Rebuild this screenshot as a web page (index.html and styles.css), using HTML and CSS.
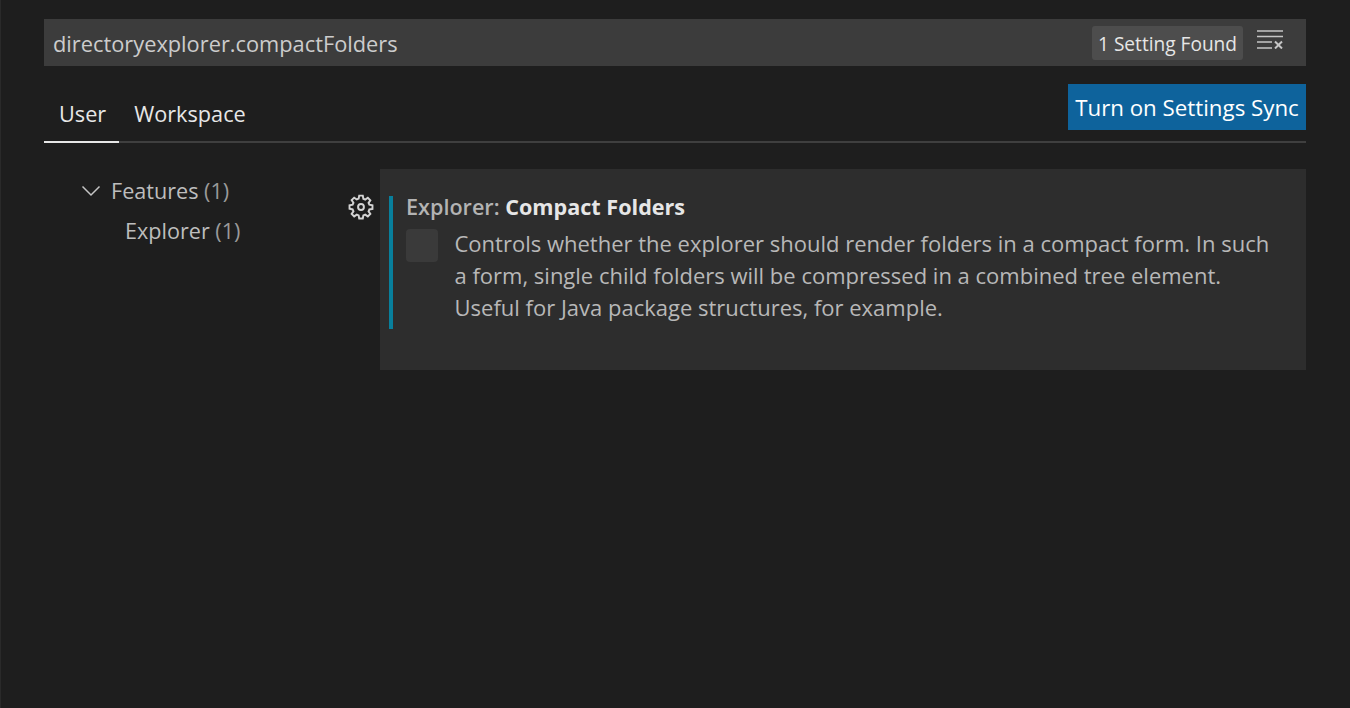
FILE: index.html
```html
<!DOCTYPE html>
<html lang="en">
<head>
<meta charset="utf-8">
<title>Settings</title>
<link rel="stylesheet" href="styles.css">
</head>
<body>
<main class="editor">
  <div class="search">
    <span class="query">directoryexplorer.compactFolders</span>
    <span class="count">1 Setting Found</span>
    <svg class="clear" width="26" height="19" viewBox="0 0 26 19" fill="none" stroke="#c5c5c5" stroke-width="1.7">
      <path d="M0 1H26M0 6.5H26M0 12H15M0 18H15"/>
      <path d="M18 11.5L25 18.5M25 11.5L18 18.5" stroke-width="2"/>
    </svg>
  </div>
  <div class="tabbar">
    <nav class="tabs">
      <span class="tab active">User</span>
      <span class="tab">Workspace</span>
    </nav>
    <button class="sync">Turn on Settings Sync</button>
  </div>
  <div class="body">
    <aside class="toc">
      <div class="toc-row top">
        <svg class="chev" width="20" height="12" viewBox="0 0 20 12" fill="none" stroke="#c5c5c5" stroke-width="1.5"><path d="M1.5 1.5L10 10L18.5 1.5"/></svg>
        <span>Features <span class="num">(1)</span></span>
      </div>
      <div class="toc-row sub"><span>Explorer <span class="num">(1)</span></span></div>
    </aside>
    <div class="gear-col">
      <svg width="26" height="26" viewBox="0 0 16 16" fill="none" stroke="#d4d4d4" stroke-width="1.2">
        <path d="M6.9 1h2.2l.35 1.9 1.15.5 1.6-1.1 1.55 1.55-1.1 1.6.5 1.15 1.9.35v2.2l-1.9.35-.5 1.15 1.1 1.6-1.55 1.55-1.6-1.1-1.15.5-.35 1.9H6.9l-.35-1.9-1.15-.5-1.6 1.1-1.55-1.55 1.1-1.6-.5-1.15L.95 9.1V6.9l1.9-.35.5-1.15-1.1-1.6L3.8 2.25l1.6 1.1 1.15-.5z"/>
        <circle cx="8" cy="8" r="1.8"/>
      </svg>
    </div>
    <section class="panel">
      <div class="setting">
        <div class="title">Explorer: <strong>Compact Folders</strong></div>
        <div class="value">
          <span class="check"></span>
          <p class="desc">Controls whether the explorer should render folders in a compact form. In such<br>a form, single child folders will be compressed in a combined tree element.<br>Useful for Java package structures, for example.</p>
        </div>
      </div>
    </section>
  </div>
</main>
</body>
</html>
```
FILE: styles.css
```css
* { box-sizing: border-box; }
html, body { margin: 0; height: 100%; }
body {
  background: #1e1e1e;
  color: #cccccc;
  font-family: "Open Sans", "Noto Sans", sans-serif;
  font-size: 22px;
  overflow: hidden;
}
.editor {
  height: 708px;
  padding: 19px 44px 0;
  border-left: 1px solid #2a2a2a;
}
.search {
  margin-left: -1px;
  height: 47px;
  background: #3c3c3c;
  display: flex;
  align-items: center;
  padding: 0 23px 0 9px;
}
.query { flex: 1; color: #cccccc; font-size: 21.8px; padding-top: 2px; }
.count {
  background: #4d4d4d;
  color: #e6e6e6;
  border-radius: 3px;
  font-size: 19.1px;
  height: 34px;
  line-height: 36px;
  padding: 0 6px;
  margin-right: 14px;
}
.clear { margin-top: -7px; }
.tabbar {
  margin-left: -1px;
  margin-top: 18px;
  height: 59px;
  display: flex;
  justify-content: space-between;
  align-items: flex-start;
  border-bottom: 2px solid #3f3f3f;
}
.tabs { display: flex; height: 59px; }
.tab {
  padding: 0 13px 0 15px;
  font-size: 21.7px;
  line-height: 60px;
  color: #e7e7e7;
  height: 59px;
}
.tab.active { border-bottom: 2px solid #e7e7e7; }
.sync {
  font: inherit;
  font-size: 22.3px;
  background: #0e639c;
  color: #ffffff;
  border: 0;
  width: 238px;
  height: 46px;
  padding: 0;
}
.body {
  margin-left: -1px;
  margin-top: 26px;
  display: flex;
}
.toc { width: 303px; padding-top: 2px; color: #bdbdbd; font-size: 21.6px; }
.toc-row { height: 40px; line-height: 40px; }
.toc-row.top { display: flex; align-items: center; padding-left: 37px; gap: 10px; }
.toc-row.sub { padding-left: 81px; }
.num { color: #9a9a9a; }
.gear-col { width: 33px; padding-top: 25px; padding-left: 1px; }
.panel {
  flex: 1;
  height: 201px;
  background: #2d2d2d;
  padding: 27px 0 0 9px;
}
.setting {
  border-left: 4px solid #087f9c;
  height: 133px;
  padding-left: 13px;
}
.title { line-height: 22px; color: #b3b3b3; font-weight: 600; font-size: 21.6px; }
.title strong { color: #e6e6e6; font-weight: 700; }
.value { display: flex; margin-top: 11px; }
.check {
  flex: none;
  width: 32px;
  height: 33px;
  border-radius: 4px;
  background: #3a3a3a;
  margin-right: 17px;
}
.desc {
  margin: -2px 0 0 -0.5px;
  line-height: 32px;
  color: #b8b8b8;
  white-space: nowrap;
}
```
